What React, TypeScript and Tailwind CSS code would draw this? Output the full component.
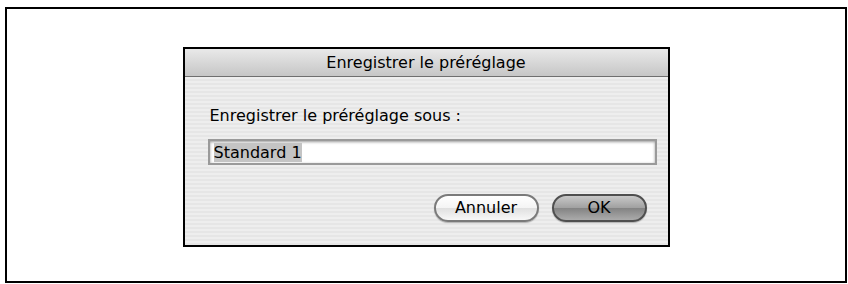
import React from 'react';

const font = "font-['DejaVu_Sans',_'Liberation_Sans',_sans-serif]";

export default function App() {
  return (
    <div className={`w-[848px] h-[284px] bg-white pl-[5px] pt-[7px] ${font}`}>
      <div className="w-[842px] h-[276px] border-2 border-black flex justify-center pt-[38px]">
        {/* Save preset dialog */}
        <div className="w-[487px] h-[200px] border-2 border-black flex flex-col bg-[repeating-linear-gradient(to_bottom,#eeeeee_0px,#eeeeee_2px,#e6e6e6_2px,#e6e6e6_4px)]">
          <div className="h-[28px] shrink-0 flex items-center justify-center border-b border-[#6f6f6f] bg-[linear-gradient(to_bottom,#e9e9e9,#c6c6c6)] text-[16px] text-black">
            Enregistrer le préréglage
          </div>

          <div className="flex flex-col pl-[23px] pr-[11px] pt-[29px]">
            <div className="pl-[2px] text-[16px] leading-[20px] text-black">
              Enregistrer le préréglage sous :
            </div>

            <div className="mt-[13px] h-[26px] border-2 border-[#9a9a9a] bg-white shadow-[inset_0_1px_3px_rgba(0,0,0,0.4)] flex items-center px-[4px]">
              <span className="bg-[#c4c4c4] text-[16px] leading-[19px] text-black">Standard 1</span>
            </div>

            <div className="mt-[29px] flex justify-end gap-[13px] pr-[10px]">
              <button className="w-[105px] h-[28px] rounded-full border-2 border-[#7a7a7a] bg-[linear-gradient(to_bottom,#ffffff,#f4f4f4_50%,#e0e0e0_52%,#f8f8f8)] shadow-[0_1px_1px_rgba(0,0,0,0.25)] text-[16px] text-black flex items-center justify-center">
                Annuler
              </button>
              <button className="w-[95px] h-[28px] rounded-full border-2 border-[#4f4f4f] bg-[linear-gradient(to_bottom,#c8c8c8,#a0a0a0_50%,#848484_52%,#ababab)] shadow-[0_1px_1px_rgba(0,0,0,0.25)] text-[16px] text-black flex items-center justify-center">
                OK
              </button>
            </div>
          </div>
        </div>
      </div>
    </div>
  );
}
